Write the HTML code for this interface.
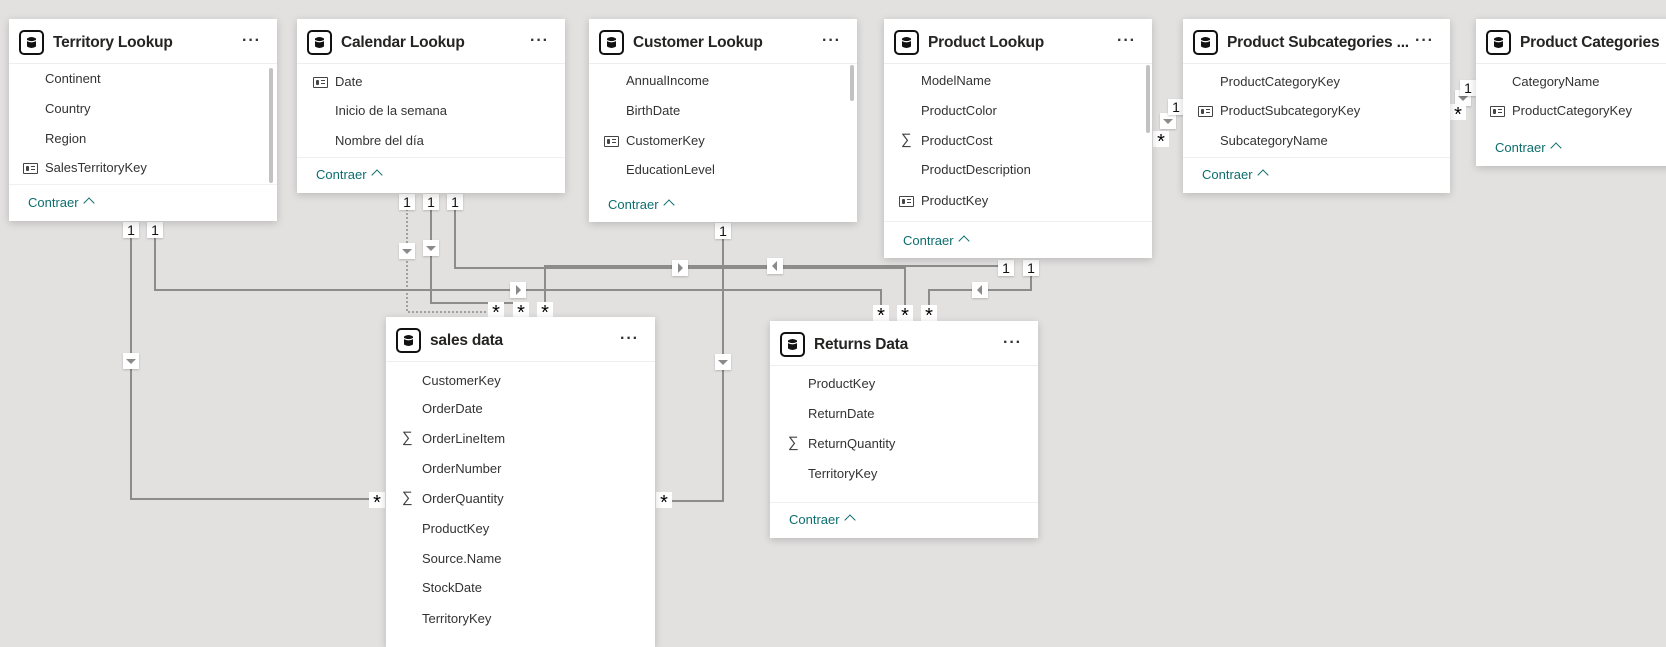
<!DOCTYPE html>
<html><head><meta charset="utf-8"><style>
body{margin:0;width:1666px;height:636px;background:#e2e1e0;font-family:"Segoe UI","Liberation Sans",sans-serif;overflow:hidden;position:relative}
.card{position:absolute;background:#fff;box-shadow:0 2px 8px rgba(0,0,0,.18);overflow:hidden}
.hdr{position:absolute;left:0;right:0;top:0;height:44px;border-bottom:1px solid #eee}
.ic{position:absolute;left:10px;top:11px}
.t{position:absolute;left:44px;top:15px;font-size:15.5px;font-weight:bold;color:#252423;white-space:nowrap;letter-spacing:-0.2px}
.dots{position:absolute;right:16px;top:13px;font-size:16px;font-weight:bold;color:#333;letter-spacing:1px}
.r{position:absolute;font-size:13px;color:#333;line-height:18px;white-space:nowrap}
.k{position:absolute;left:-22px;top:4px;width:13px;height:9px;border:1.3px solid #444;border-radius:1px}
.k:before{content:"";position:absolute;left:2px;top:2px;width:3px;height:5px;background:#444;border-radius:1px}
.k:after{content:"";position:absolute;left:7px;top:2px;width:4px;height:1.3px;background:#444;box-shadow:0 3px 0 #444}
.s{position:absolute;left:-20px;top:-1px;font-size:15px;color:#444}
.c{position:absolute;left:19px;font-size:13px;color:#0e6e6e;line-height:18px}
.c:after{content:"";display:inline-block;width:7px;height:7px;border-left:1.3px solid #0e6e6e;border-top:1.3px solid #0e6e6e;transform:rotate(45deg);margin-left:6px;position:relative;top:0px}
.sep{position:absolute;left:0;right:0;height:1px;background:#f0f0f0}
.sb{position:absolute;width:4px;background:#c2c2c2;border-radius:2px}
.b{position:absolute;width:16px;height:16px;background:#fff;box-shadow:0 1px 2px rgba(0,0,0,.2);font-size:14px;text-align:center;line-height:16px;color:#111}
.st{position:absolute;width:16px;height:16px;background:#fff;font-size:20px;text-align:center;line-height:22px;color:#000}
.m{position:absolute;width:16px;height:16px;background:#fff;box-shadow:0 1px 2px rgba(0,0,0,.2)}
</style></head><body>
<svg width="1666" height="636" style="position:absolute;left:0;top:0">
<g fill="none" stroke="#8c8c8c" stroke-width="2">
<polyline points="131,230 131,499 378,499"/>
<polyline points="155,230 155,290 881,290 881,312"/>
<polyline points="407,205 407,312 496,312" stroke-dasharray="2,2" stroke-width="1.5"/>
<polyline points="431,205 431,303 521,303 521,310"/>
<polyline points="455,205 455,268 905,268 905,312"/>
<polyline points="545,310 545,266 1006,266"/>
<polyline points="1031,270 1031,290 929,290 929,312"/>
<polyline points="723,233 723,501 664,501"/>
</g></svg>
<div class="m" style="left:123px;top:353px"><svg width="16" height="16"><path d="M3 6 L13 6 L8 11Z" fill="#8a8a8a"/></svg></div>
<div class="m" style="left:399px;top:243px"><svg width="16" height="16"><path d="M3 6 L13 6 L8 11Z" fill="#8a8a8a"/></svg></div>
<div class="m" style="left:423px;top:240px"><svg width="16" height="16"><path d="M3 6 L13 6 L8 11Z" fill="#8a8a8a"/></svg></div>
<div class="m" style="left:715px;top:354px"><svg width="16" height="16"><path d="M3 6 L13 6 L8 11Z" fill="#8a8a8a"/></svg></div>
<div class="m" style="left:510px;top:282px"><svg width="16" height="16"><path d="M6 3 L6 13 L11 8Z" fill="#8a8a8a"/></svg></div>
<div class="m" style="left:672px;top:260px"><svg width="16" height="16"><path d="M6 3 L6 13 L11 8Z" fill="#8a8a8a"/></svg></div>
<div class="m" style="left:767px;top:258px"><svg width="16" height="16"><path d="M10 3 L10 13 L5 8Z" fill="#8a8a8a"/></svg></div>
<div class="m" style="left:972px;top:282px"><svg width="16" height="16"><path d="M10 3 L10 13 L5 8Z" fill="#8a8a8a"/></svg></div>
<div class="m" style="left:1160px;top:113px"><svg width="16" height="16"><path d="M3 6 L13 6 L8 11Z" fill="#8a8a8a"/></svg></div>
<div class="m" style="left:1455px;top:90px"><svg width="16" height="16"><path d="M3 6 L13 6 L8 11Z" fill="#8a8a8a"/></svg></div>
<div class="b" style="left:123px;top:222px">1</div><div class="b" style="left:147px;top:222px">1</div>
<div class="b" style="left:399px;top:194px">1</div><div class="b" style="left:423px;top:194px">1</div><div class="b" style="left:447px;top:194px">1</div>
<div class="b" style="left:715px;top:223px">1</div>
<div class="b" style="left:998px;top:260px">1</div><div class="b" style="left:1023px;top:260px">1</div>
<div class="b" style="left:1168px;top:99px">1</div><div class="b" style="left:1460px;top:80px">1</div>
<div class="st" style="left:488px;top:302px">*</div><div class="st" style="left:513px;top:302px">*</div><div class="st" style="left:537px;top:302px">*</div>
<div class="st" style="left:873px;top:305px">*</div><div class="st" style="left:897px;top:305px">*</div><div class="st" style="left:921px;top:305px">*</div>
<div class="st" style="left:369px;top:492px">*</div><div class="st" style="left:656px;top:492px">*</div>
<div class="st" style="left:1153px;top:131px">*</div><div class="st" style="left:1450px;top:104px">*</div>

<svg width="0" height="0" style="position:absolute"><defs><symbol id="db" viewBox="0 0 25 25"><rect x="1" y="1" width="23" height="23" rx="4" fill="none" stroke="#111" stroke-width="2"/><path d="M8 8.5 Q12.5 5.5 17 8.5 L17 16.5 Q12.5 19.5 8 16.5Z" fill="#111"/><path d="M8 10.5 Q12.5 13 17 10.5" stroke="#fff" stroke-width="1.2" fill="none"/></symbol></defs></svg>

<div class="card" style="left:9px;top:19px;width:268px;height:202px">
<div class="hdr"><svg class="ic" width="25" height="25"><use href="#db"/></svg><div class="t">Territory Lookup</div><div class="dots">···</div></div>
<div class="r" style="left:36px;top:51px">Continent</div><div class="r" style="left:36px;top:81px">Country</div><div class="r" style="left:36px;top:111px">Region</div><div class="r" style="left:36px;top:140px"><span class="k"></span>SalesTerritoryKey</div>
<div class="sep" style="top:165px"></div><div class="c" style="top:175px">Contraer</div><div class="sb" style="left:260px;top:49px;height:115px"></div></div>

<div class="card" style="left:297px;top:19px;width:268px;height:174px">
<div class="hdr"><svg class="ic" width="25" height="25"><use href="#db"/></svg><div class="t">Calendar Lookup</div><div class="dots">···</div></div>
<div class="r" style="left:38px;top:54px"><span class="k"></span>Date</div><div class="r" style="left:38px;top:83px">Inicio de la semana</div><div class="r" style="left:38px;top:113px">Nombre del día</div>
<div class="sep" style="top:138px"></div><div class="c" style="top:147px">Contraer</div></div>

<div class="card" style="left:589px;top:19px;width:268px;height:203px">
<div class="hdr"><svg class="ic" width="25" height="25"><use href="#db"/></svg><div class="t">Customer Lookup</div><div class="dots">···</div></div>
<div class="r" style="left:37px;top:53px">AnnualIncome</div><div class="r" style="left:37px;top:83px">BirthDate</div><div class="r" style="left:37px;top:113px"><span class="k"></span>CustomerKey</div><div class="r" style="left:37px;top:142px">EducationLevel</div>
<div class="c" style="top:177px">Contraer</div><div class="sb" style="left:261px;top:46px;height:36px"></div></div>

<div class="card" style="left:884px;top:19px;width:268px;height:239px">
<div class="hdr"><svg class="ic" width="25" height="25"><use href="#db"/></svg><div class="t">Product Lookup</div><div class="dots">···</div></div>
<div class="r" style="left:37px;top:53px">ModelName</div><div class="r" style="left:37px;top:83px">ProductColor</div><div class="r" style="left:37px;top:113px"><span class="s">∑</span>ProductCost</div><div class="r" style="left:37px;top:142px">ProductDescription</div><div class="r" style="left:37px;top:173px"><span class="k"></span>ProductKey</div>
<div class="sep" style="top:202px"></div><div class="c" style="top:213px">Contraer</div><div class="sb" style="left:262px;top:46px;height:68px"></div></div>

<div class="card" style="left:1183px;top:19px;width:267px;height:174px">
<div class="hdr"><svg class="ic" width="25" height="25"><use href="#db"/></svg><div class="t">Product Subcategories ...</div><div class="dots">···</div></div>
<div class="r" style="left:37px;top:54px">ProductCategoryKey</div><div class="r" style="left:37px;top:83px"><span class="k"></span>ProductSubcategoryKey</div><div class="r" style="left:37px;top:113px">SubcategoryName</div>
<div class="sep" style="top:138px"></div><div class="c" style="top:147px">Contraer</div></div>

<div class="card" style="left:1476px;top:19px;width:200px;height:147px">
<div class="hdr"><svg class="ic" width="25" height="25"><use href="#db"/></svg><div class="t">Product Categories</div></div>
<div class="r" style="left:36px;top:54px">CategoryName</div><div class="r" style="left:36px;top:83px"><span class="k"></span>ProductCategoryKey</div>
<div class="c" style="top:120px">Contraer</div></div>

<div class="card" style="left:386px;top:317px;width:269px;height:330px">
<div class="hdr"><svg class="ic" width="25" height="25"><use href="#db"/></svg><div class="t">sales data</div><div class="dots">···</div></div>
<div class="r" style="left:36px;top:55px">CustomerKey</div><div class="r" style="left:36px;top:83px">OrderDate</div><div class="r" style="left:36px;top:113px"><span class="s">∑</span>OrderLineItem</div><div class="r" style="left:36px;top:143px">OrderNumber</div><div class="r" style="left:36px;top:173px"><span class="s">∑</span>OrderQuantity</div><div class="r" style="left:36px;top:203px">ProductKey</div><div class="r" style="left:36px;top:233px">Source.Name</div><div class="r" style="left:36px;top:262px">StockDate</div><div class="r" style="left:36px;top:293px">TerritoryKey</div></div>

<div class="card" style="left:770px;top:321px;width:268px;height:217px">
<div class="hdr"><svg class="ic" width="25" height="25"><use href="#db"/></svg><div class="t">Returns Data</div><div class="dots">···</div></div>
<div class="r" style="left:38px;top:54px">ProductKey</div><div class="r" style="left:38px;top:84px">ReturnDate</div><div class="r" style="left:38px;top:114px"><span class="s">∑</span>ReturnQuantity</div><div class="r" style="left:38px;top:144px">TerritoryKey</div>
<div class="sep" style="top:181px"></div><div class="c" style="top:190px">Contraer</div></div>
</body></html>
